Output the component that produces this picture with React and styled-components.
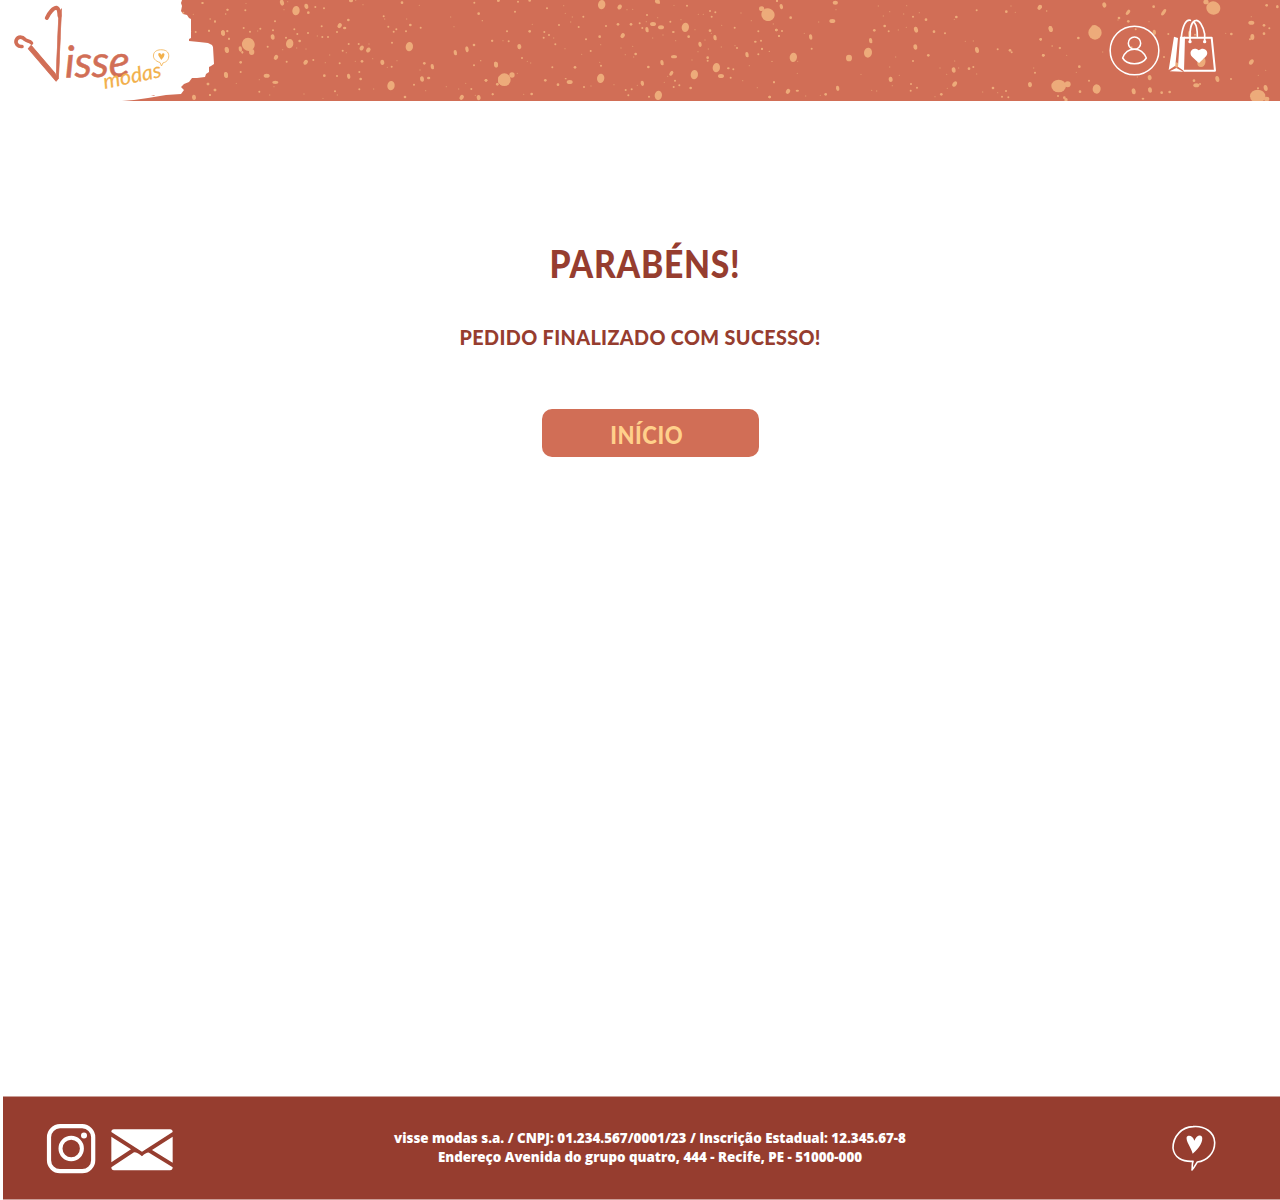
import React from "react";
import styled, { createGlobalStyle } from "styled-components";

const colors = {
  coral: "#d16e56",
  brick: "#963d2f",
  peach: "#edab7a",
  sand: "#ffd08b",
  amber: "#f2b04b",
};

const GlobalStyle = createGlobalStyle`
  * { box-sizing: border-box; }
  body { margin: 0; background: #fff; }
`;

const Page = styled.div`
  display: flex;
  flex-direction: column;
  height: 1200px;
  font-family: Lato, "Open Sans", sans-serif;
  overflow: hidden;
`;

const Header = styled.header`
  position: relative;
  display: flex;
  justify-content: space-between;
  flex: 0 0 101px;
  background: ${colors.coral};
  overflow: hidden;
`;

const Speckles = styled.svg`
  position: absolute;
  inset: 0;
  width: 1280px;
  height: 101px;
`;

const Brand = styled.svg`
  position: relative;
  display: block;
  width: 230px;
  height: 101px;
`;

const Actions = styled.nav`
  position: relative;
  display: flex;
  align-items: flex-start;
  gap: 8px;
  padding-right: 63px;
`;

const IconButton = styled.button`
  display: block;
  padding: 0;
  border: 0;
  background: none;
  margin-top: ${(p) => p.$top}px;
  cursor: pointer;
  svg { display: block; }
`;

const Main = styled.main`
  flex: 1;
  display: flex;
  flex-direction: column;
  align-items: center;
  padding-top: 140px;
`;

const Title = styled.h1`
  margin: 0;
  padding-left: 9px;
  color: ${colors.brick};
  font-size: 37px;
  line-height: 46px;
  font-weight: 900;
  letter-spacing: 0.8px;
  white-space: nowrap;
`;

const Message = styled.p`
  margin: 38px 0 0;
  color: ${colors.brick};
  font-size: 21px;
  line-height: 24px;
  font-weight: 900;
  letter-spacing: 0.4px;
  white-space: nowrap;
`;

const HomeButton = styled.button`
  width: 217px;
  height: 48px;
  margin: 60px 0 0 21px;
  padding: 3px 7px 0 0;
  border: 0;
  border-radius: 10px;
  background: ${colors.coral};
  color: ${colors.sand};
  font: 900 24px/45px Lato, sans-serif;
  letter-spacing: 0.6px;
  cursor: pointer;
`;

const Condensed = styled.span`
  display: inline-block;
  transform: scaleX(${(p) => p.$ratio});
`;

const Footer = styled.footer`
  flex: 0 0 104px;
  margin: 0 0 0 3px;
  padding: 0 64px 0 43px;
  border: solid #cb9e97;
  border-width: 1px 0;
  display: grid;
  grid-template-columns: 127px 1fr 44px;
  align-items: center;
  background: ${colors.brick};
`;

const Social = styled.div`
  display: flex;
  align-items: center;
  gap: 15px;
  padding-top: 2px;
  svg { display: block; }
  svg + svg { margin-top: 1px; }
`;

const Legal = styled.p`
  margin: 0;
  padding-right: 45px;
  color: #fff;
  font: 800 13.36px/19px "Open Sans", sans-serif;
  text-align: center;
  white-space: nowrap;
`;

/* Paint drops: [cx, cy, rx, ry, rotation], in thirds of a pixel from each tile's left edge. */
const tiles = [
  { x: 0, drops: [
    [607,9,3,3],[682,29,3,3],[677,42,2,2],[550,38,3,3],[580,43,2,2],[631,57,2,2],[645,65,3,3],[587,96,3,3],[627,92,3,3],[669,99,6,8,-10],[682,94,3,3],[687,116,3,3],[680,150,6,9,-10],[678,225,6,9,-10],[624,252,4,4],[645,270,4,4],[630,285,3,3],[582,292,6,8,-10],[575,94,1,1],
  ]},
  { x: 200, drops: [
    [8,9,3,3],[246,8,6,9,-15],[263,5,2,2],[138,10,2,2],[83,29,3,3],[77,42,2,2],[136,31,3,3],[288,32,11,14,8],[319,19,6,8,-15],[346,21,3,3],[325,38,4,4],[252,29,2,2],[372,25,3,3],[453,2,6,5],[467,1,2,2],[489,14,2,2],[30,57,2,2],[45,64,3,3],[225,64,3,3],[27,92,3,3],[69,99,6,8,-10],[82,93,3,3],[87,116,3,3],[131,84,3,3],[150,95,3,3],[173,93,2,2],[181,86,3,3],[219,91,3,3],[218,111,6,8,-10],[283,88,3,3],[292,102,3,3],[258,113,3,3],[324,99,3,3],[365,79,3,3],[352,108,2,2],[367,111,3,3],[384,111,3,3],[419,77,6,8,35],[434,84,5,4],[445,60,4,4],[411,96,3,3],
    [145,133,19,20,-25],[155,156,8,9],[121,147,5,8,-10],[127,157,3,4],[81,150,6,8,-10],[269,131,11,14,8],[299,123,4,4],[203,140,3,3],[248,149,2,2],[290,144,2,2],[318,147,2,2],[228,172,6,8,35],[260,185,3,3],[122,187,4,4],[317,187,6,8,40],[340,180,3,3],[376,188,2,2],[389,165,2,2],[428,152,3,3],[439,158,2,2],[419,190,3,3],[446,132,3,3],[476,132,3,3],[485,144,6,8,30],[505,150,6,8,35],[507,132,2,2],[551,49,3,3],[554,57,2,2],[565,80,3,3],[581,95,3,3],[589,88,3,3],[576,128,3,3],[620,57,2,2],[631,75,4,4],[618,94,3,3],[662,83,3,3],[628,140,11,14,8],[606,8,4,4],[658,16,2,2],[752,51,2,2],[762,80,2,2],[823,8,3,3],[836,41,4,4],[847,62,2,2],[876,122,3,3],[895,2,4,3],
    [801,148,5,9,-10],[822,135,4,4],[766,158,5,8,-10],[842,182,2,2],[822,196,3,3],[888,194,6,9,-10],[547,187,6,8,-10],[466,184,2,2],[486,184,4,4],[518,176,2,2],[591,182,2,2],[575,200,3,3],[562,202,2,2],[673,190,4,4],[697,200,5,8,-10],[660,210,2,2],[666,237,6,8,-10],[686,234,5,4],[642,254,3,3],[573,257,11,14,8],[677,272,2,2],[739,260,2,2],[797,250,2,2],[776,267,2,2],[814,267,3,3],[858,241,4,4],[892,252,3,3],[898,240,4,11],[878,283,3,3],[785,292,6,8,35],[836,293,6,8,-10],[826,286,2,2],[615,291,4,4],[521,267,2,2],[478,268,3,3],[482,237,4,4],[478,216,3,3],[446,229,5,8,-10],[411,228,3,3],[373,227,4,4],[405,274,3,3],[412,285,2,2],[369,295,2,2],[312,282,2,2],[226,247,9,5],[200,227,9,6],[222,260,2,2],[178,239,2,2],[178,275,3,3],[209,285,2,2],[122,216,3,3],[109,250,2,2],[78,225,6,8,-10],[24,252,4,4],[45,270,4,4],[30,285,3,3],
  ]},
  { x: 480, drops: [
    [55,2,4,3],[114,5,3,3],[149,2,4,3],[105,35,3,3],[7,62,2,2],[37,122,3,3],[69,122,2,2],[86,124,3,3],[81,94,3,3],[149,94,4,4],[157,73,2,2],[193,96,3,3],[191,113,3,3],[207,105,3,3],[221,114,2,2],[226,133,3,3],[237,75,3,3],[251,17,2,2],[256,40,2,2],[277,51,2,2],[272,66,2,2],[296,81,3,3],[310,50,3,3],[318,118,3,3],[201,25,3,3],[365,14,11,14,8],[419,21,6,8,35],[441,29,2,2],[458,28,2,2],[378,78,3,3],[414,73,4,4],[453,73,4,4],[359,110,4,4],[428,107,6,8,35],[362,134,2,2],[332,153,3,3],[305,163,2,2],[255,146,2,2],[118,140,6,8,-10],[126,174,3,3],[142,184,2,2],[152,189,2,2],[48,193,6,8,-10],[2,182,2,2],[532,4,7,7],[537,8,3,4],[582,16,2,2],[621,17,3,3],[501,45,3,3],[499,65,2,2],[519,72,9,6],[543,82,9,6],[533,53,2,2],[501,89,5,8,-10],[487,84,3,3],[479,70,3,3],[518,114,2,2],[549,105,2,2],[571,65,3,3],[580,96,4,3],[603,59,2,2],[616,82,11,14,8],[645,89,2,2],[626,110,4,4],[587,122,2,2],[655,43,2,2],[670,43,2,2],[690,33,3,3],[706,37,3,3],[695,50,3,3],[725,76,2,2],[690,92,4,4],[694,100,2,2],[705,113,5,8,-10],[675,120,2,2],[660,133,5,8,-10],[654,155,2,2],[685,147,2,2],[724,141,2,2],[764,83,3,3],[783,39,2,2],[814,62,2,2],[835,94,3,3],[864,44,20,19,25],[845,26,8,7],[880,72,2,2],[889,90,4,4],[897,108,3,3],[891,2,3,4],[843,122,3,3],[826,125,4,3],[846,146,3,3],[868,154,2,2],[835,163,3,3],[801,164,5,8,-10],[808,197,2,2],[876,184,2,2],[765,137,2,2],[771,144,3,3],[683,173,4,4],[683,182,3,3],[709,203,11,14,8],[745,205,4,3],[760,208,3,3],[723,228,9,6],[752,233,3,3],[788,242,2,2],[832,263,2,2],[882,247,3,3],[869,291,4,4],
    [643,224,11,14,8],[636,180,2,2],[582,170,9,5],[546,188,5,8,-10],[574,220,5,8,35],[563,229,2,2],[585,242,3,3],[553,247,2,2],[581,261,3,3],[598,256,3,3],[632,264,4,4],[535,286,11,14,8],[507,290,3,3],[487,250,5,8,-10],[472,256,2,2],[455,268,3,3],[437,270,3,3],[445,286,3,3],[402,254,2,2],[362,235,11,14,8],[359,187,2,2],[363,197,3,3],[423,144,2,2],[458,139,2,2],[467,162,4,4],[461,171,2,2],[436,164,2,2],[505,201,4,4],[333,258,2,2],[312,261,3,3],[269,246,9,6],[257,236,3,2],[234,254,4,4],[196,241,4,4],[217,202,3,3],[285,202,4,4],[155,282,4,4],[131,283,2,2],[73,239,19,19],[96,225,8,8],[52,253,4,4],[112,220,2,2],[18,241,4,4],[38,283,3,3],
  ]},
  { x: 760, drops: [
    [51,2,3,4],[64,20,5,8,-15],[92,53,4,4],[49,90,4,4],[66,93,3,3],[57,108,3,3],[133,100,2,2],[152,111,5,8,-10],[155,146,3,3],[176,66,2,2],[217,63,9,6],[226,8,8,6],[228,29,2,2],[355,18,2,2],[389,35,2,2],[370,48,2,2],[431,42,2,2],[440,17,2,2],[459,50,3,3],[478,38,2,2],[498,59,4,4],[374,78,4,4],[386,94,3,3],[343,91,4,4],[415,90,2,2],[439,82,2,2],[468,89,6,9,-15],[522,95,4,4],[555,100,3,3],[589,51,4,4],[583,58,2,2],[650,31,3,3],[739,35,4,4],[766,37,2,2],[753,18,2,2],[839,22,6,8,35],[860,33,2,2],[872,87,6,9,-10],[842,118,4,4],[876,138,2,2],[850,166,4,4],[898,144,2,4],[332,122,5,8,-10],[324,158,12,15,8],[267,174,9,10],[100,172,11,14,8],[113,184,2,2],[36,184,2,2],[28,154,2,2],[6,147,3,3],[466,141,6,8,-10],[505,166,4,4],[459,183,3,3],[407,171,2,2],[389,201,2,2],[418,226,2,2],[392,238,6,8,-10],[397,257,2,2],[453,252,3,3],[471,263,3,3],[452,272,3,3],[350,273,2,2],[335,271,2,2],[303,223,2,2],[233,265,5,8,-10],[197,283,4,4],[181,286,2,2],[137,288,2,2],[84,274,6,8,35],[112,272,5,3],[112,220,2,2],[42,247,3,3],[29,291,4,4],[544,283,4,4],[525,290,2,2],[562,265,2,2],[584,252,6,9,35],[581,210,6,8,-10],[596,204,2,2],[560,223,2,2],[540,204,2,2],[584,183,2,2],[627,206,4,4],[640,201,3,3],[650,222,2,2],[616,124,2,2],[640,123,2,2],[651,150,6,9,-10],[713,148,3,3],[750,151,4,4],[755,157,3,3],[821,204,2,2],[825,218,3,3],[810,254,6,8,-10],[699,264,4,4],[668,276,2,2],[713,278,2,2],[738,273,3,3],[726,290,3,3],[745,292,3,3],
  ]},
  { x: 1040, drops: [
    [2,20,4,5],[20,33,2,2],[32,87,6,9,-10],[2,118,3,4],[37,138,2,2],[10,166,4,4],[60,144,3,3],[80,166,2,2],[115,114,4,4],[165,98,20,21],[163,82,9,7],[193,15,6,8,-20],[237,54,4,4],[234,60,2,2],[264,37,5,9,35],[265,64,4,4],[341,20,4,4],[371,37,5,11,35],[327,65,2,2],[343,97,5,8,-10],[385,102,3,3],[287,88,3,3],[188,156,2,2],[118,200,4,4],[109,217,2,2],[147,242,3,3],[170,267,12,14,8],[56,258,22,19],[83,253,9,9],[54,288,3,3],[73,293,4,4],[78,299,5,5],[120,275,4,4],[281,274,6,9,-10],[309,296,4,3],[330,270,6,8,-10],[329,233,6,8,-10],[292,231,2,2],[365,278,4,4],[389,276,4,4],[275,142,3,3],[372,171,3,3],[410,195,5,8],[449,102,5,10],[465,104,3,3],[483,188,11,13],[532,237,6,9,-10],[573,237,3,3],[462,242,4,4],[469,256,9,6],[480,252,3,3],[520,24,21,20,20],[498,6,8,7],[680,16,4,4],[712,20,4,5],[634,50,2,2],[634,68,9,6],[672,76,4,4],[688,85,3,3],[672,101,4,4],[637,111,6,9],[630,118,3,3],[557,100,2,2],[574,102,4,4],[634,186,6,9,35],[677,211,2,2],[655,226,2,2],[677,264,6,9,-10],[654,265,3,3],[653,289,23,20],[680,297,8,7],
  ]},
];

function PaintSpeckles() {
  return (
    <Speckles viewBox="0 0 1280 101" aria-hidden="true">
      {tiles.map((tile) => (
        <g key={tile.x} transform={`translate(${tile.x} 0) scale(0.33333)`} fill={colors.peach}>
          {tile.drops.map(([x, y, rx, ry, angle = 0], i) => (
            <ellipse key={i} cx={x} cy={y} rx={rx} ry={ry} transform={`rotate(${angle} ${x} ${y})`} opacity={rx < 3 ? 0.6 : 1} />
          ))}
        </g>
      ))}
    </Speckles>
  );
}

function Logo() {
  return (
    <Brand viewBox="0 0 230 101" role="img" aria-label="Visse modas">
      <path
        fill="#fff"
        d="M0 0H182L181 3 182 6 181 11 183 14 187 15 189 18 191 19 191 38 189 39 189 41 199 42 208 43 212 45 213 47 214 64 211 66 209 67 209 72 206 74 205 77 197 78 192 78 189 82 184 84 181 87 184 90 181 94 166 95 148 98 134 100 122 101H0Z"
      />
      <path fill={colors.coral} d="M151 96L155 95 154 96Z" />
      <g fill="none" stroke={colors.coral} strokeLinecap="round" strokeLinejoin="round">
        <path strokeWidth="3.6" d="M22 46.5C18 47 15 43.5 16.3 40C18 36 22.5 36.5 25 39.5C27 41.5 29.5 40.5 31.5 43" />
        <path strokeWidth="4" d="M46.8 18C49 13 53.5 7.5 56.8 7.8C59 8.5 59.3 12 59.5 16" />
      </g>
      <g fill={colors.coral} stroke={colors.coral} fontFamily="Lato, sans-serif">
        <text fontWeight="300" fontSize="50" strokeWidth="0.5" transform="matrix(1.06 -1.26 0.353 1.444 40 100.4)">V</text>
        <text x="65" y="77.5" fontStyle="italic" fontSize="44" fontWeight="400" strokeWidth="0.5" textLength="65" transform="rotate(-1 65 77)">isse</text>
      </g>
      <text x="104.5" y="89" fill={colors.amber} stroke={colors.amber} strokeWidth="0.2" fontFamily="Lato, sans-serif" fontStyle="italic" fontSize="21" textLength="59" lengthAdjust="spacingAndGlyphs" transform="rotate(-12 105 88)">modas</text>
      <path fill="none" stroke={colors.amber} strokeWidth=".8" d="M160 62.5C155 61 153 58 153.5 55C154 51 158 49.5 162 49.8C167 50 169.2 53 168.7 57C168.2 61 165 62.5 163 62.8L161.5 66Z" />
      <path fill={colors.amber} d="M161.3 60C160 57.5 157.5 55.5 158.5 53.5C159.5 52.5 161 53.5 161.3 55C162 53.2 164 52.7 164.5 54.2C164.5 56.5 162.5 58.5 161.3 60Z" />
    </Brand>
  );
}

const UserIcon = () => (
  <svg width="51" height="51" viewBox="208 74 153 153" fill="none" stroke="#fff" strokeWidth="4.6">
    <circle cx="284.5" cy="150.5" r="73" />
    <circle cx="284.5" cy="128.5" r="18.5" />
    <path strokeLinejoin="round" d="M249 173C255 157 269 147 284.5 147S313 157 320 173C306 196 262 196 249 173Z" />
  </svg>
);

const BagIcon = () => (
  <svg width="49" height="54" viewBox="383 58 147 162" fill="none" stroke="#fff" strokeLinecap="round" strokeLinejoin="round">
    <path strokeWidth="6" d="M432 114H514L524 213H432" />
    <path fill="#fff" stroke="none" d="M419 111H434L431 214 413 201ZM401 111L413 115 405 198 385 211ZM388 215L408 205 429 216Z" />
    <path strokeWidth="5" d="M423 112C427 76 438 58 450 62M449 126V108C449 48 482 48 493 103V126M463 70C470 79 471 93 471 110" />
    <circle cx="449" cy="126" r="5" fill="#fff" stroke="none" />
    <circle cx="493" cy="126" r="5" fill="#fff" stroke="none" />
    <path fill="#fff" stroke="none" d="M476 191L456 172C442 158 458 138 475 152C491 138 509 156 497 170Z" />
    <path fill={colors.peach} stroke="none" d="M472 187L476 191 493 175C498 184 496 199 484 200C476 200 472 194 472 187Z" />
  </svg>
);

const InstagramIcon = () => (
  <svg width="50" height="50" viewBox="0 0 50 50" fill="none" stroke="#fff">
    <rect x="3" y="2.2" width="44.2" height="45" rx="11" strokeWidth="4.2" />
    <circle cx="25.2" cy="24.5" r="10.7" strokeWidth="4" />
    <circle cx="38" cy="11.5" r="3" fill="#fff" stroke="none" />
  </svg>
);

const MailIcon = () => (
  <svg width="62" height="42" viewBox="332 131 186 126" fill="#fff">
    <path d="M333 140Q333 132 341 132H509Q517 132 517 140L425 199ZM333 154L392 192 333 231ZM517 154V232L455 194ZM333 246L401 201Q410 200 425 213Q439 200 446 202L517 246Q517 255 509 255H341Q333 255 333 246Z" />
  </svg>
);

const ChatHeartIcon = () => (
  <svg width="44" height="46" viewBox="95 121 132 138" fill="none" stroke="#fff" strokeLinejoin="round">
    <path strokeWidth="4.8" d="M158 230C126 232 101 219 98 190C98 155 124 127 158 126C193 123 222 142 223 173C224 206 199 229 171 232C166 239 163 248 155 256C157 248 154 239 158 230Z" />
    <path fill="#fff" stroke="none" d="M157 207C153 190 136 170 139 157C144 149 158 153 162 168C168 153 179 149 185 156C189 169 178 189 157 207Z" />
  </svg>
);

export default function App() {
  return (
    <Page>
      <GlobalStyle />
      <Header>
        <PaintSpeckles />
        <Logo />
        <Actions>
          <IconButton $top={25} aria-label="Minha conta"><UserIcon /></IconButton>
          <IconButton $top={19} aria-label="Sacola"><BagIcon /></IconButton>
        </Actions>
      </Header>
      <Main>
        <Title><Condensed $ratio={0.91}>PARABÉNS!</Condensed></Title>
        <Message><Condensed $ratio={0.94}>PEDIDO FINALIZADO COM SUCESSO!</Condensed></Message>
        <HomeButton><Condensed $ratio={0.92}>INÍCIO</Condensed></HomeButton>
      </Main>
      <Footer>
        <Social><InstagramIcon /><MailIcon /></Social>
        <Legal>
          visse modas s.a. / CNPJ: 01.234.567/0001/23 / Inscrição Estadual: 12.345.67-8
          <br />
          Endereço Avenida do grupo quatro, 444 - Recife, PE - 51000-000
        </Legal>
        <ChatHeartIcon />
      </Footer>
    </Page>
  );
}
